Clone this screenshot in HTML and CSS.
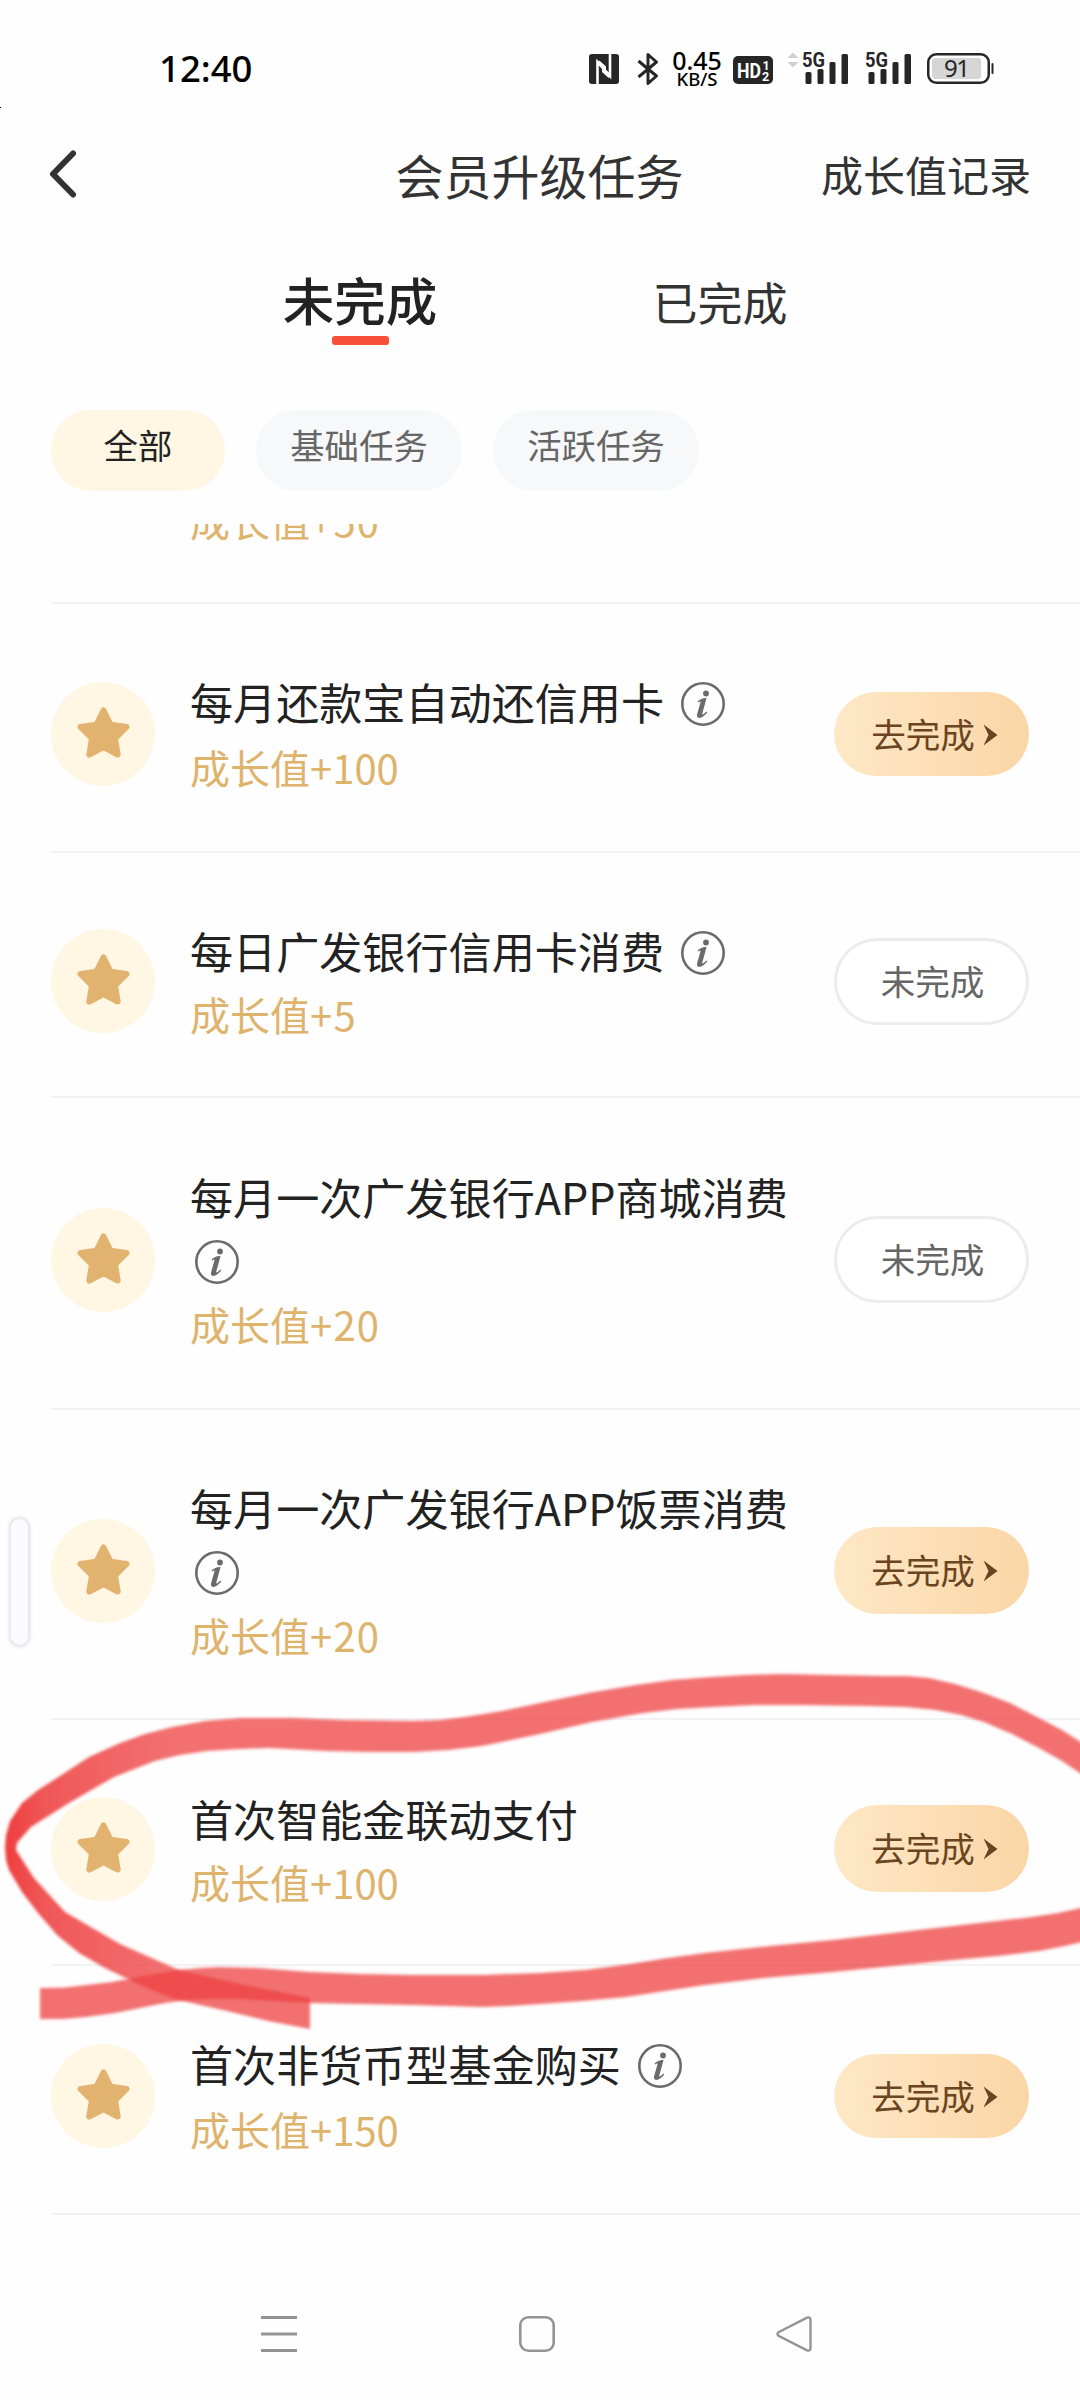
FILE: index.html
```html
<!DOCTYPE html>
<html lang="zh-CN">
<head>
<meta charset="utf-8">
<title>会员升级任务</title>
<link rel="stylesheet" href="styles.css">
</head>
<body>
<svg class="defs" width="0" height="0" aria-hidden="true">
  <symbol id="star" viewBox="0 0 53 51"><path d="M26.500 3.500L33.500 17.600L49.500 20L38 31.500L40.700 47.500L26.500 40L12.300 47.500L15 31.500L3.500 20L19.500 17.600Z" fill="#e2b36f" stroke="#e2b36f" stroke-width="6" stroke-linejoin="round"/></symbol>
  <symbol id="info" viewBox="0 0 46 46"><circle cx="23" cy="23" r="20.700" fill="none" stroke="#6b6b6b" stroke-width="2.600"/><circle cx="26" cy="12.500" r="2.900" fill="#6b6b6b"/><path d="M17.500 20.500C20.500 18 24 16.600 26.500 17.200L22.300 32.500C22 34 23 34 26.500 30.500L27.300 31.500C24 35.500 21 37.300 18.600 36.800C16.600 36.400 16.800 34.300 17.300 32.500L20.300 22C20.700 20.300 20 20.200 18.200 21.400Z" fill="#6b6b6b"/></symbol>
  <symbol id="arrow" viewBox="0 0 15 22"><path d="M.5 .5L14.500 11L.5 21.500L5.500 11Z" fill="#6b4522"/></symbol>
  <symbol id="signal" viewBox="0 0 47 34"><g fill="#262626"><rect x="3.500" y="20" width="6" height="12" rx="1.500"/><rect x="15.500" y="17" width="6" height="15" rx="1.500"/><rect x="27.500" y="10" width="6" height="22" rx="1.500"/><rect x="39.500" y="2" width="6.500" height="30" rx="1.500"/></g><text x="0" y="15" font-family="Roboto" font-weight="700" font-size="20.500" textLength="23" lengthAdjust="spacingAndGlyphs" fill="#262626">5G</text></symbol>
</svg>
<div class="screen">
  <div class="status">
    <span class="clock">12:40</span>
    <div class="status-icons">
      <svg class="nfc" width="30" height="30" viewBox="0 0 30 30"><rect width="30" height="30" rx="3" fill="#262626"/><path d="M8.500 30V8L21 22V0" fill="none" stroke="#fff" stroke-width="2.600"/><path d="M9 8L15 13.500V17L21 22.500" fill="none" stroke="#fff" stroke-width="4"/></svg>
      <svg class="bt" width="22" height="34" viewBox="0 0 22 34"><path d="M1.500 9L19.500 24L11 31.500V2.500L19.500 10L1.500 25" fill="none" stroke="#262626" stroke-width="3" stroke-linejoin="round"/></svg>
      <div class="speed"><span class="speed-num">0.45</span><span class="speed-unit">KB/S</span></div>
      <svg class="hd" width="40" height="28" viewBox="0 0 40 28"><rect width="40" height="28" rx="5" fill="#262626"/><g fill="#fff" font-family="Roboto" font-weight="700"><text x="4" y="21.500" font-size="19.500" textLength="24" lengthAdjust="spacingAndGlyphs">HD</text><text x="29.500" y="13.500" font-size="12.500">1</text><text x="29" y="24.500" font-size="12.500">2</text></g></svg>
      <svg class="updown" width="12" height="16" viewBox="0 0 12 16"><path d="M6 .5L11.500 6H.5ZM6 15.500L.5 10H11.500Z" fill="#d0d0d0"/></svg>
      <svg class="sig" width="47" height="34"><use href="#signal"/></svg>
      <svg class="sig sig-two" width="47" height="34"><use href="#signal"/></svg>
      <svg class="battery" width="68" height="32" viewBox="0 0 68 32"><rect x="1.250" y="1.250" width="60.500" height="28.500" rx="8" fill="#fff" stroke="#262626" stroke-width="2.500"/><rect x="5" y="5" width="49" height="21" rx="3" fill="#d6d6d6"/><rect x="64.500" y="10" width="2" height="11" rx="1" fill="#262626"/><text x="17" y="24" font-family="Noto Sans" font-size="24" textLength="26" fill="#262626">91</text></svg>
    </div>
  </div>
  <span class="edge-dot"></span>

  <header class="header">
    <svg class="back" width="30" height="50" viewBox="0 0 30 50"><path d="M25 4.500L5 25L25 45.500" fill="none" stroke="#333" stroke-width="6" stroke-linecap="round" stroke-linejoin="round"/></svg>
    <h1 class="title">会员升级任务</h1>
    <span class="records">成长值记录</span>
  </header>

  <nav class="tabs">
    <span class="tab tab-active">未完成</span>
    <span class="tab">已完成</span>
  </nav>

  <div class="chips">
    <span class="chip chip-active">全部</span>
    <span class="chip">基础任务</span>
    <span class="chip">活跃任务</span>
  </div>

  <main class="list">
    <section class="partial"><p class="growth">成长值<span class="wide">+50</span></p></section>

    <section class="task task-a">
      <span class="badge"><svg width="53" height="51"><use href="#star"/></svg></span>
      <div class="text"><h2 class="name">每月还款宝自动还信用卡<svg class="info"><use href="#info"/></svg></h2><p class="growth">成长值+100</p></div>
      <span class="btn">去完成<svg class="arrow"><use href="#arrow"/></svg></span>
    </section>

    <section class="task task-b">
      <span class="badge"><svg width="53" height="51"><use href="#star"/></svg></span>
      <div class="text"><h2 class="name">每日广发银行信用卡消费<svg class="info"><use href="#info"/></svg></h2><p class="growth">成长值<span class="wide">+5</span></p></div>
      <span class="btn btn-idle">未完成</span>
    </section>

    <section class="task task-c">
      <span class="badge"><svg width="53" height="51"><use href="#star"/></svg></span>
      <div class="text"><h2 class="name">每月一次广发银行APP商城消费<br><svg class="info info-first"><use href="#info"/></svg></h2><p class="growth">成长值<span class="wide">+20</span></p></div>
      <span class="btn btn-idle">未完成</span>
    </section>

    <section class="task task-d">
      <span class="badge"><svg width="53" height="51"><use href="#star"/></svg></span>
      <div class="text"><h2 class="name">每月一次广发银行APP饭票消费<br><svg class="info info-first"><use href="#info"/></svg></h2><p class="growth">成长值<span class="wide">+20</span></p></div>
      <span class="btn btn-tall">去完成<svg class="arrow"><use href="#arrow"/></svg></span>
    </section>

    <section class="task task-e">
      <span class="badge"><svg width="53" height="51"><use href="#star"/></svg></span>
      <div class="text"><h2 class="name">首次智能金联动支付</h2><p class="growth">成长值+100</p></div>
      <span class="btn btn-tall">去完成<svg class="arrow"><use href="#arrow"/></svg></span>
    </section>

    <section class="task task-f">
      <span class="badge"><svg width="53" height="51"><use href="#star"/></svg></span>
      <div class="text"><h2 class="name">首次非货币型基金购买<svg class="info"><use href="#info"/></svg></h2><p class="growth">成长值+150</p></div>
      <span class="btn">去完成<svg class="arrow"><use href="#arrow"/></svg></span>
    </section>
  </main>

  <footer class="navbar">
    <svg width="38" height="38" viewBox="0 0 38 38"><path d="M1 2.500H37M1 19H37M1 35.500H37" stroke="#949494" stroke-width="2.800"/></svg>
    <svg width="38" height="38" viewBox="0 0 38 38"><rect x="2.300" y="2.300" width="33.400" height="33.400" rx="8" fill="none" stroke="#949494" stroke-width="2.600"/></svg>
    <svg width="38" height="38" viewBox="0 0 38 38"><path d="M3.500 17.200L32 2.700Q35.500 1.500 35.500 5V33Q35.500 36.500 32 35.300L3.500 20.800Q1.500 19 3.500 17.200Z" fill="none" stroke="#949494" stroke-width="2.400"/></svg>
  </footer>

  <span class="edge-handle"></span>

  <svg class="marker" width="1080" height="400" viewBox="0 1655 1080 400">
    <defs>
      <linearGradient id="ink" gradientUnits="userSpaceOnUse" x1="5" y1="0" x2="170" y2="0"><stop offset="0" stop-color="#ee3838" stop-opacity=".97"/><stop offset=".25" stop-color="#ee3d3d" stop-opacity=".86"/><stop offset="1" stop-color="#ee4040" stop-opacity=".75"/></linearGradient>
      <filter id="soft" x="-5%" y="-5%" width="110%" height="110%"><feGaussianBlur stdDeviation="1.600"/></filter>
    </defs>
    <path filter="url(#soft)" fill="url(#ink)" d="M310 1998L240 1984L179 1970L120 1944L65 1912L34 1878L16 1850L17 1843L31 1827L69 1803L114 1777L155 1761L180 1755L207 1751L238 1749L269 1748L327 1751L370 1752L413 1752L448 1750L482 1746L540 1734L592 1722L643 1713L677 1709L712 1707L755 1705L798 1705L867 1706L905 1707L936 1710L961 1715L984 1722L1012 1734L1039 1748L1062 1761L1090 1780V1748L1062 1730L1039 1718L1010 1703L981 1692L955 1684L929 1678L907 1676L884 1676L781 1674L745 1675L712 1677L672 1680L636 1685L588 1693L540 1703L502 1711L465 1717L440 1720L413 1721L344 1720L293 1718L241 1718L205 1721L172 1727L145 1734L120 1743L89 1757L63 1774L38 1790L22 1803L10 1821L6 1835L5 1848L6 1860L9 1870L22 1892L38 1913L57 1935L79 1953L105 1968L134 1982L152 1990L172 1998L200 2005L227 2011L268 2021L310 2029Z"/>
    <path filter="url(#soft)" fill="#ee4040" fill-opacity=".75" d="M40 1988L65 1987.500L86 1985L112 1982L138 1977L160 1973L179 1970L200 1968L220 1967L258 1968L310 1972L360 1974L413 1975L482 1975L540 1973L585 1970L630 1964L668 1958L705 1953L770 1946L833 1940L953 1926L1032 1917L1058 1913L1090 1906V1940L1065 1946L1039 1951L998 1956L953 1960L893 1966L833 1972L764 1978L705 1985L665 1991L626 1997L582 2001L540 2004L510 2006L482 2007L413 2005L360 2004L310 2003L275 2001L241 1999L212 1999L186 2000L165 2003L145 2007L115 2013L86 2017L63 2019L40 2019Z"/>
  </svg>
</div>
</body>
</html>
```
FILE: styles.css
```css
* { box-sizing: border-box; }
body {
  margin: 0;
  background: #fff;
  font-family: "Noto Sans CJK SC", sans-serif;
  color: #333;
}
h1, h2, p { margin: 0; font-weight: 400; }
svg { display: block; flex: none; }
.defs { position: absolute; }
.screen {
  position: relative;
  width: 1080px;
  height: 2400px;
  overflow: hidden;
  display: flex;
  flex-direction: column;
  background: #fefefe;
}

.status {
  height: 108px;
  padding: 0 85px 0 159px;
  display: flex;
  justify-content: space-between;
}
.clock {
  padding-top: 43px;
  font: 500 36.5px/50px "Noto Sans", sans-serif;
  color: #000;
}
.status-icons { display: flex; align-items: flex-start; padding-top: 52px; }
.nfc { margin-top: 2px; }
.bt { margin-left: 18px; }
.speed {
  width: 54px;
  margin-left: 11px;
  display: flex;
  flex-direction: column;
  align-items: center;
  font-family: "Noto Sans", sans-serif;
  font-weight: 500;
  color: #000;
}
.speed-num { font-size: 25px; line-height: 17px; }
.speed-unit { font-size: 18.5px; line-height: 19px; }
.hd { margin: 4px 0 0 9px; }
.updown { margin: 0 0 0 14px; }
.sig { margin-left: 3px; }
.sig-two { margin-left: 16px; }
.battery { margin: 1px 0 0 15px; }
.edge-dot {
  position: absolute;
  left: 0;
  top: 107px;
  width: 1px;
  height: 1px;
  background: #000;
}

.header {
  height: 134px;
  padding: 0 49px 2px 48px;
  display: grid;
  grid-template-columns: 1fr auto 1fr;
  align-items: center;
}
.title { font-size: 48px; line-height: 70px; }
.records { justify-self: end; font-size: 42px; line-height: 60px; }

.tabs {
  height: 108px;
  padding: 0 180px;
  display: flex;
}
.tab {
  width: 360px;
  text-align: center;
  font-size: 45px;
  line-height: 120px;
}
.tab-active {
  font-size: 51.5px;
  font-weight: 500;
  color: #222;
  display: flex;
  flex-direction: column;
  align-items: center;
  line-height: 114px;
}
.tab-active::after {
  content: "";
  width: 57px;
  height: 9px;
  margin-top: -20px;
  border-radius: 3px;
  background: #f84f38;
}

.chips {
  height: 174px;
  padding: 60px 51px 33px;
  display: flex;
  gap: 31px;
}
.chip {
  width: 206px;
  border-radius: 40px;
  background: #f7f8fa;
  font-size: 34.4px;
  line-height: 69px;
  text-align: center;
  color: #666;
}
.chip-active { width: 174px; background: #fff6e3; color: #222; }

.list { padding-left: 51px; }
.partial {
  height: 80px;
  padding-left: 139px;
  overflow: hidden;
  border-bottom: 2px solid #f3f3f5;
}
.partial .growth { margin-top: -36px; }
.task {
  display: flex;
  align-items: center;
  padding: 13px 51px 0 0;
  border-bottom: 2px solid #f3f3f5;
}
.task-a { height: 249px; }
.task-b { height: 245px; }
.task-c { height: 312px; }
.task-d { height: 310px; }
.task-e { height: 246px; }
.task-f { height: 249px; }
.badge {
  width: 104px;
  height: 104px;
  border-radius: 50%;
  background: #fff6e3;
  display: flex;
  align-items: center;
  justify-content: center;
}
.badge svg { margin-top: -3px; }
.text { flex: 1; padding: 2px 0 0 35px; }
.name {
  display: flow-root;
  font-size: 43.1px;
  line-height: 64px;
  color: #222;
  white-space: nowrap;
}
.growth { font-size: 40px; line-height: 64px; color: #deb36c; }
.wide { letter-spacing: 1.2px; }
.task-a .growth, .task-f .growth { line-height: 68px; }
.task-c .text, .task-d .text { padding-top: 0; }
.info {
  display: inline-block;
  width: 46px;
  height: 46px;
  margin-left: 16px;
  vertical-align: -6.5px;
}
.info-first { margin-left: 4px; }

.btn {
  width: 195px;
  height: 84px;
  padding: 0 0 3px 6px;
  border-radius: 44px;
  background: linear-gradient(90deg, #fee8c6, #fad6a6);
  display: flex;
  align-items: center;
  justify-content: center;
  font-size: 34.6px;
  line-height: 50px;
  color: #6b4522;
}
.btn-tall { height: 87px; }
.btn-idle {
  height: 87px;
  padding-left: 2px;
  border: 3px solid #ececec;
  background: #fff;
  color: #666;
}
.arrow { width: 15px; height: 22px; margin: 4px 0 0 8px; }

.navbar {
  flex: 1;
  padding: 100px 267px 0 260px;
  display: flex;
  justify-content: space-between;
  align-items: flex-start;
}

.edge-handle {
  position: absolute;
  left: 9px;
  top: 1517px;
  width: 21px;
  height: 130px;
  border: 2px solid #e9e9f2;
  border-radius: 11px;
  background: #fafaff;
  box-shadow: 0 0 4px #e6e6ea;
}
.marker { position: absolute; left: 0; top: 1655px; }
```
